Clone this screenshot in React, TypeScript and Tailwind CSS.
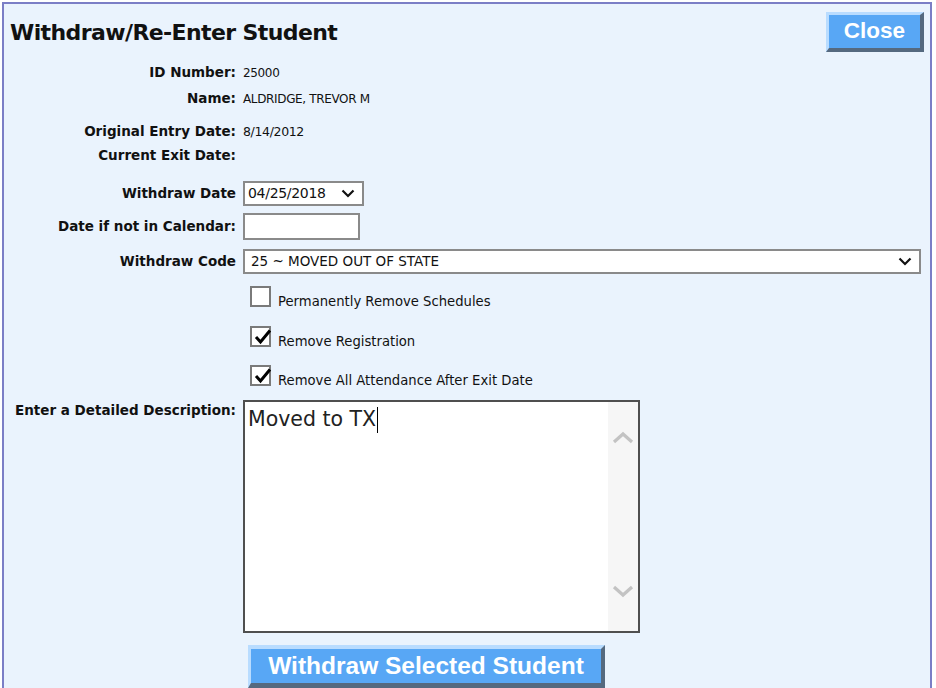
import React from "react";

const labelCls =
  "w-[232px] shrink-0 text-right font-bold text-[13.5px] text-[#111] leading-none whitespace-nowrap";
const font = { fontFamily: '"DejaVu Sans", "Noto Sans", sans-serif' };

function Chevron({ className = "" }: { className?: string }) {
  return (
    <svg width="14" height="9" viewBox="0 0 14 9" className={className}>
      <polyline points="1.5,1.5 7,7 12.5,1.5" fill="none" stroke="#111" strokeWidth="2.2" />
    </svg>
  );
}

function Check() {
  return (
    <svg width="18" height="16" viewBox="0 0 18 16" className="absolute left-[2px] top-[1px]">
      <polyline points="2,8 6.5,13 16,1.5" fill="none" stroke="#000" strokeWidth="3" />
    </svg>
  );
}

function CheckRow({ checked, label, mt }: { checked: boolean; label: string; mt: string }) {
  return (
    <div className={`flex items-end ${mt}`}>
      <div className="w-[239px] shrink-0" />
      <div className="ml-[7px] relative w-[21px] h-[21px] border-2 border-[#7a7a7a] bg-white shrink-0">
        {checked && <Check />}
      </div>
      <span className="ml-[7px] text-[13.2px] text-[#111] leading-none mb-[-1px]" style={font}>
        {label}
      </span>
    </div>
  );
}

export default function App() {
  return (
    <div className="w-[936px] h-[688px] bg-white overflow-hidden" style={font}>
      <div className="ml-[2px] mt-[2px] w-[930px] h-[720px] border-2 border-[#7b7ec6] bg-[#eaf3fd] flex flex-col">
        {/* header */}
        <div className="flex justify-between items-start h-[56px]">
          <h1 className="ml-[6px] mt-[18px] text-[22px] tracking-[-0.6px] font-bold leading-none text-[#111]">
            Withdraw/Re-Enter Student
          </h1>
          <button
            className="mt-[8px] mr-[6px] w-[98px] h-[40px] border-t-[3px] border-l-[3px] border-b-[4px] border-r-[4px] border-t-[#b9dcff] border-l-[#b9dcff] border-b-[#55697f] border-r-[#55697f] bg-[#58a7f5] text-white font-bold text-[22.5px] leading-none flex items-center justify-center"
            style={{ fontFamily: '"Liberation Sans", Arial, sans-serif' }}
          >
            Close
          </button>
        </div>

        {/* info rows */}
        <div className="flex items-center h-[26px]">
          <div className={labelCls}>ID Number:</div>
          <div className="ml-[7px] text-[12px] tracking-[-0.35px] text-[#111]">25000</div>
        </div>
        <div className="flex items-center h-[26px]">
          <div className={labelCls}>Name:</div>
          <div className="ml-[7px] text-[12px] tracking-[-0.35px] text-[#111]">ALDRIDGE, TREVOR M</div>
        </div>
        <div className="flex items-center h-[26px] mt-[7px]">
          <div className={labelCls}>Original Entry Date:</div>
          <div className="ml-[7px] text-[12.5px] tracking-[-0.35px] text-[#111]">8/14/2012</div>
        </div>
        <div className="flex items-center h-[22px]">
          <div className={labelCls}>Current Exit Date:</div>
        </div>

        {/* withdraw date */}
        <div className="flex items-center h-[25px] mt-[14px]">
          <div className={labelCls}>Withdraw Date</div>
          <div className="ml-[7px] w-[121px] h-[25px] border-2 border-[#8a8a8a] bg-white flex items-center justify-between pl-[3px] pr-[7px]">
            <span className="text-[14px] tracking-[-0.3px] text-[#111]">04/25/2018</span>
            <Chevron />
          </div>
        </div>

        {/* date if not in calendar */}
        <div className="flex items-center h-[27px] mt-[7px]">
          <div className={labelCls}>Date if not in Calendar:</div>
          <div className="ml-[7px] w-[117px] h-[27px] border-2 border-[#8a8a8a] bg-white" />
        </div>

        {/* withdraw code */}
        <div className="flex items-center h-[25px] mt-[9px]">
          <div className={labelCls}>Withdraw Code</div>
          <div className="ml-[7px] w-[678px] h-[25px] border-2 border-[#8a8a8a] bg-white flex items-center justify-between pl-[6px] pr-[7px]">
            <span className="text-[13.5px] tracking-[0px] text-[#111]">25 ~ MOVED OUT OF STATE</span>
            <Chevron />
          </div>
        </div>

        <CheckRow checked={false} label="Permanently Remove Schedules" mt="mt-[12px]" />
        <CheckRow checked={true} label="Remove Registration" mt="mt-[19px]" />
        <CheckRow checked={true} label="Remove All Attendance After Exit Date" mt="mt-[18px]" />

        {/* description */}
        <div className="flex items-start mt-[14px]">
          <div className={`${labelCls} pt-[4px]`}>Enter a Detailed Description:</div>
          <div className="ml-[7px] w-[397px] h-[233px] border-2 border-[#4f4f4f] bg-white flex">
            <div className="flex-1 pl-[3px] pt-[7px]">
              <span className="text-[20.5px] text-[#222] leading-none">Moved to TX</span>
              <span className="inline-block w-[1px] h-[26px] bg-black align-middle ml-[1px] -mt-[4px]" />
            </div>
            <div className="w-[30px] bg-[#f6f6f6] flex flex-col items-center justify-between pt-[29px] pb-[33px]">
              <svg width="22" height="13" viewBox="0 0 22 13">
                <polyline points="2,11 11,3 20,11" fill="none" stroke="#c3c3c3" strokeWidth="3.2" />
              </svg>
              <svg width="22" height="13" viewBox="0 0 22 13">
                <polyline points="2,2 11,10 20,2" fill="none" stroke="#c3c3c3" strokeWidth="3.2" />
              </svg>
            </div>
          </div>
        </div>

        {/* submit */}
        <div className="flex mt-[12px]">
          <div className="w-[244px] shrink-0" />
          <button
            className="w-[357px] h-[43px] border-t-[4px] border-l-[3px] border-b-[5px] border-r-[4px] border-t-[#b9dcff] border-l-[#b9dcff] border-b-[#55697f] border-r-[#55697f] bg-[#58a7f5] text-white font-bold text-[24.5px] leading-none flex items-center justify-center"
            style={{ fontFamily: '"Liberation Sans", Arial, sans-serif' }}
          >
            Withdraw Selected Student
          </button>
        </div>
      </div>
    </div>
  );
}
